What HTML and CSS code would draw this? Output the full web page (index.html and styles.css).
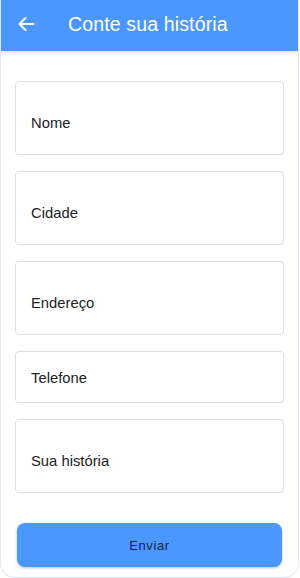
FILE: index.html
```html
<!DOCTYPE html>
<html lang="pt">
<head>
<meta charset="utf-8">
<link rel="stylesheet" href="styles.css">
</head>
<body>
<div class="screen">
  <header class="appbar">
    <svg class="back" width="18" height="16" viewBox="0 0 18 16" aria-hidden="true">
      <path d="M16.5 8H2.5M8.5 2L2.5 8l6 6" fill="none" stroke="#fff" stroke-width="2" stroke-linecap="round" stroke-linejoin="round"/>
    </svg>
    <h1 class="title">Conte sua história</h1>
  </header>
  <main class="form">
    <div class="field tall"><span>Nome</span></div>
    <div class="field tall"><span>Cidade</span></div>
    <div class="field tall"><span>Endereço</span></div>
    <div class="field"><span>Telefone</span></div>
    <div class="field tall"><span>Sua história</span></div>
  </main>
  <div class="actions">
    <button class="submit">Enviar</button>
  </div>
</div>
</body>
</html>
```
FILE: styles.css
```css
html, body {
  margin: 0;
  padding: 0;
  background: #fff;
}
body {
  font-family: "Liberation Sans", Arial, sans-serif;
}
.screen {
  width: 299px;
  height: 578px;
  box-sizing: border-box;
  border: 1px solid #e6e9ee;
  border-top: none;
  border-bottom-color: #d3e2fb;
  border-radius: 0 0 15px 15px;
  display: flex;
  flex-direction: column;
  overflow: hidden;
}
.appbar {
  height: 51px;
  background: #4a97ff;
  display: flex;
  align-items: center;
  padding-left: 17px;
  box-shadow: 0 2px 4px rgba(0, 0, 0, 0.12);
  margin: 0 -1px;
  flex-shrink: 0;
}
.back {
  display: block;
  margin-top: -3px;
}
.title {
  margin: -2px 0 0 33px;
  font-size: 19.6px;
  font-weight: normal;
  color: #fff;
  letter-spacing: 0.1px;
}
.form {
  padding: 30px 14px 0 14px;
  display: flex;
  flex-direction: column;
  gap: 16px;
}
.field {
  height: 52px;
  box-sizing: border-box;
  border: 1px solid #dedede;
  border-radius: 4px;
  display: flex;
  align-items: center;
  padding-left: 15px;
  font-size: 14.8px;
  color: #222;
}
.field span {
  padding-top: 1px;
}
.field.tall {
  height: 74px;
  padding-top: 9px;
}
.actions {
  padding: 30px 16px 0 16px;
}
.submit {
  width: 100%;
  height: 44px;
  border: none;
  border-radius: 8px;
  background: #4a97ff;
  box-shadow: 0 1px 3px rgba(0, 0, 0, 0.25);
  font-family: "Liberation Sans", Arial, sans-serif;
  font-size: 13px;
  letter-spacing: 0.6px;
  color: #1c2433;
  padding: 0;
}
```
